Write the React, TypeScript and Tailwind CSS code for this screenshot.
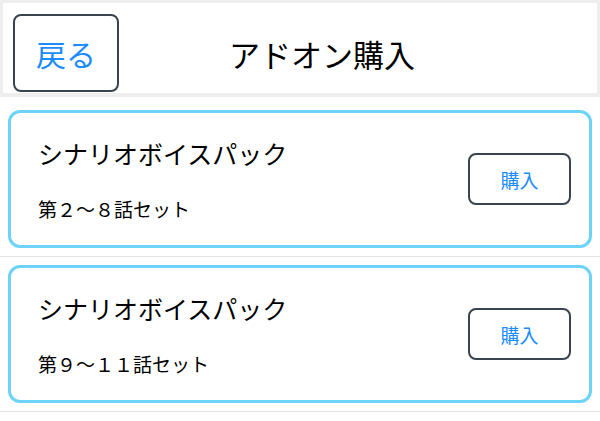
const items = [
  { title: "シナリオボイスパック", sub: "第２〜８話セット" },
  { title: "シナリオボイスパック", sub: "第９〜１１話セット" },
];

export default function App() {
  return (
    <div
      className="w-[600px] h-[421px] bg-white overflow-hidden"
      style={{ fontFamily: '"Noto Sans CJK JP", "Noto Sans", sans-serif' }}
    >
      {/* Header */}
      <div className="border-[3px] border-b-4 border-[#eeeeee] h-[97px] flex items-start pt-[11px]">
        <button className="ml-[10px] w-[106px] h-[78px] border-2 border-[#3a4350] rounded-lg text-[30px] text-[#1a8cff] flex items-center justify-center leading-none">
          戻る
        </button>
        <div className="flex-1 flex justify-center text-[31px] text-black leading-none pt-[24px]">
          アドオン購入
        </div>
        <div className="w-[72px]" />
      </div>

      {/* List */}
      <div className="mt-[5px]">
        {items.map((item, i) => (
          <div key={i} className="px-[8px] py-[8px] border-b border-[#e5e5e5]">
            <div className="h-[138px] border-[3px] border-[#6dd3f9] rounded-xl flex items-center pl-[27px] pr-[18px]">
              <div className="flex-1 flex flex-col">
                <div className="text-[25px] leading-none text-black">{item.title}</div>
                <div className="mt-[33px] text-[19px] leading-none text-black">{item.sub}</div>
              </div>
              <button className="w-[103px] h-[52px] border-2 border-[#3a4350] rounded-lg text-[19px] text-[#1a8cff] flex items-center justify-center leading-none">
                購入
              </button>
            </div>
          </div>
        ))}
      </div>
    </div>
  );
}
